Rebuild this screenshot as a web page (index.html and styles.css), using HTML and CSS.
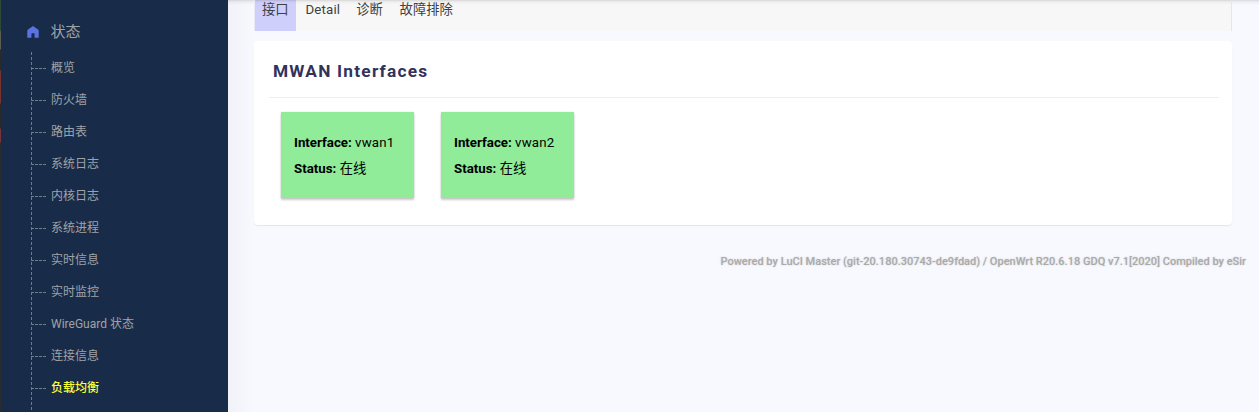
FILE: index.html
```html
<!DOCTYPE html>
<html lang="zh-CN">
<head>
<meta charset="utf-8">
<title>MWAN Interfaces</title>
<link rel="stylesheet" href="styles.css">
</head>
<body>
<div class="layout">
  <div class="edge"></div>
  <nav class="sidebar">
    <div class="section">
      <svg class="home" width="12" height="12" viewBox="0 0 12 12"><path fill="#5b73e0" d="M6 0 11 3.5Q11.7 4 11.7 4.7V11.8H7.6V7.8Q7.6 7.2 7 7.2H5Q4.4 7.2 4.4 7.8V11.8H.3V4.7Q.3 4 1 3.5Z"/></svg>
      <span class="section-name">状态</span>
    </div>
    <ul class="tree">
      <li>概览</li>
      <li>防火墙</li>
      <li>路由表</li>
      <li>系统日志</li>
      <li>内核日志</li>
      <li>系统进程</li>
      <li>实时信息</li>
      <li>实时监控</li>
      <li>WireGuard 状态</li>
      <li>连接信息</li>
      <li class="active">负载均衡</li>
    </ul>
  </nav>
  <main class="main">
    <div class="tabs">
      <a class="tab selected">接口</a>
      <a class="tab latin">Detail</a>
      <a class="tab">诊断</a>
      <a class="tab">故障排除</a>
    </div>
    <section class="panel">
      <h2 class="title">MWAN Interfaces</h2>
      <div class="cards">
        <div class="card">
          <div><b>Interface:</b> <span class="value">vwan1</span></div>
          <div><b>Status:</b> 在线</div>
        </div>
        <div class="card">
          <div><b>Interface:</b> <span class="value">vwan2</span></div>
          <div><b>Status:</b> 在线</div>
        </div>
      </div>
    </section>
    <footer class="footer"><span>Powered by LuCI Master (git-20.180.30743-de9fdad) / OpenWrt R20.6.18 GDQ v7.1[2020] Compiled by eSir</span></footer>
  </main>
</div>
</body>
</html>
```
FILE: styles.css
```css
* { box-sizing: border-box; }
body {
  margin: 0;
  height: 412px;
  overflow: hidden;
  background: #f8f9fe;
  font-family: Roboto, "Noto Sans CJK SC", sans-serif;
}
.layout { display: flex; height: 412px; }
.edge {
  width: 1px;
  background: linear-gradient(#2c4a36 0 30px, #5a5f50 32px 49px, #2a2a2a 50px 70px, #78342c 71px 103px, #2a2a2a 104px 128px, #78343a 129px 142px, #2a2d30 143px);
}
.sidebar { width: 227px; background: #182c4a; color: #a0a3a6; }
.section { display: flex; align-items: center; height: 52px; padding: 12px 0 0 26px; }
.home { margin-right: 11.5px; }
.section-name { font-size: 15px; line-height: 20px; }
.tree {
  list-style: none;
  margin: 0 0 0 30px;
  padding: 0;
  height: 360px;
  background: repeating-linear-gradient(#6f7c8a 0 3px, transparent 3px 5px) 0 0 / 1px 100% no-repeat;
}
.tree li {
  height: 32px;
  line-height: 32px;
  padding-left: 20px;
  font-size: 12px;
  background: repeating-linear-gradient(90deg, #6f7c8a 0 3px, transparent 3px 4px) 0 16px / 15px 1px no-repeat;
}
.tree .active { color: #ffff38; font-weight: 500; }
.main {
  flex: 1;
  padding: 0 27px 0 26px;
  background:
    linear-gradient(rgba(0,0,0,.13), rgba(0,0,0,.04) 2px, transparent 5px) 0 0 / 100% 5px no-repeat,
    linear-gradient(90deg, #f1f2f8, #f8f9fe 26px);
}
.tabs {
  display: flex;
  height: 31px;
  background: linear-gradient(rgba(0,0,0,.13), rgba(0,0,0,.03) 2px, transparent 5px), #f7f7f7;
  border-right: 1px solid #e3e6ea;
  border-left: 1px solid #e8e9f5;
}
.tab { height: 31px; padding: 0 7px; margin-right: 2.8px; font-size: 13.3px; line-height: 20px; color: #404040; }
.selected { margin-right: 2.4px; background: linear-gradient(rgba(0,0,0,.13), rgba(0,0,0,.02) 2px, transparent 4px), #cfcffb; }
.latin { letter-spacing: .15px; margin-left: .5px; margin-right: 2px; }
.panel {
  height: 184px;
  margin-top: 10px;
  padding: 0 13px 0 15px;
  border-radius: 4px;
  background: #fff;
  box-shadow: 0 1px 1px rgba(0,0,0,.08);
}
.title {
  margin: 0;
  height: 57px;
  padding: 19px 4px 0;
  font-size: 17.3px;
  line-height: 23px;
  letter-spacing: 1.22px;
  font-weight: 700;
  color: #32325d;
  border-bottom: 1px solid #eee;
}
.cards { display: flex; gap: 27px; padding: 14px 12px; }
.card {
  width: 133px;
  height: 86px;
  padding: 18px 13px 16px;
  background: #90ec98;
  box-shadow: 0 2px 2px rgba(0,0,0,.2), 0 0 2px rgba(0,0,0,.1);
  font-size: 13.3px;
  line-height: 26px;
  color: #000;
  white-space: nowrap;
}
.value { letter-spacing: .15px; }
.footer {
  display: flex;
  justify-content: flex-end;
  margin: 28px -14px 0 0;
  font-size: 11.02px;
  line-height: 18px;
  font-weight: 500;
  color: #aaa;
  text-shadow: 0 0 2px #ccc;
}
```
